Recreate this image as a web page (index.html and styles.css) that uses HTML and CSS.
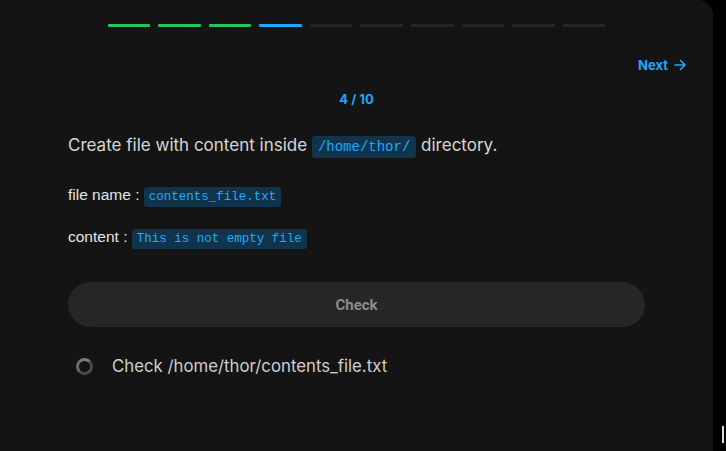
FILE: index.html
```html
<!DOCTYPE html>
<html>
<head>
<meta charset="utf-8">
<link rel="stylesheet" href="styles.css">
</head>
<body>
<div class="panel">
  <div class="progress">
    <span class="seg done"></span>
    <span class="seg done"></span>
    <span class="seg done"></span>
    <span class="seg current"></span>
    <span class="seg"></span>
    <span class="seg"></span>
    <span class="seg"></span>
    <span class="seg"></span>
    <span class="seg"></span>
    <span class="seg"></span>
  </div>
  <div class="nav">
    <a class="next">Next
      <svg width="14" height="14" viewBox="0 0 14 14" fill="none" stroke="currentColor" stroke-width="1.6" stroke-linecap="round" stroke-linejoin="round"><path d="M2 7h10M7.5 2.5 12 7l-4.5 4.5"/></svg>
    </a>
  </div>
  <div class="counter">4 / 10</div>
  <p class="title">Create file with content inside <code class="code big">/home/thor/</code> directory.</p>
  <p class="field">file name : <code class="code">contents_file.txt</code></p>
  <p class="field second">content : <code class="code">This is not empty file</code></p>
  <button class="check-btn">Check</button>
  <div class="check-item">
    <span class="ring"></span>
    <span class="check-text">Check /home/thor/contents_file.txt</span>
  </div>
</div>
<span class="cursor"></span>
</body>
</html>
```
FILE: styles.css
```css
html, body {
  margin: 0;
  padding: 0;
  background: #000;
  width: 726px;
  height: 451px;
  overflow: hidden;
}
body {
  display: flex;
  position: relative;
  font-family: Inter, "Noto Sans", sans-serif;
}
.panel {
  width: 713px;
  height: 451px;
  background: #141414;
  border-top-right-radius: 15px;
  box-sizing: border-box;
  padding: 24px 68px 0 68px;
  display: flex;
  flex-direction: column;
}
.progress {
  align-self: center;
  width: 498px;
  display: flex;
  gap: 8px;
  height: 3px;
}
.seg {
  flex: 1;
  background: #262626;
  border-radius: 1px;
}
.seg.done { background: #22c55e; }
.seg.current { background: #1ea7fd; }
.nav {
  display: flex;
  justify-content: flex-end;
  margin-top: 30px;
  margin-right: -42px;
  height: 16px;
}
.next {
  color: #1ea7fd;
  font-weight: 700;
  font-size: 13px;
  display: flex;
  align-items: center;
  gap: 5px;
}
.counter {
  text-align: center;
  color: #1ea7fd;
  font-weight: 700;
  font-size: 13px;
  margin-top: 18px;
  line-height: 16px;
}
.title {
  margin: 27px 0 0 0;
  font-size: 17px;
  color: #d6d6d6;
  line-height: 22px;
}
.code {
  font-family: "Liberation Mono", monospace;
  background: #11344d;
  color: #22a9fb;
  font-size: 12.5px;
  padding: 3px 5px;
  border-radius: 3px;
}
.code.big {
  font-size: 14px;
  padding: 3px 6px;
}
.field {
  margin: 27px 0 0 0;
  font-family: "Liberation Sans", Arial, sans-serif;
  font-size: 15.5px;
  color: #e4e4e4;
  line-height: 20px;
}
.field.second { margin-top: 20px; }
.check-btn {
  margin-top: 33px;
  height: 45px;
  border: none;
  border-radius: 23px;
  background: #262626;
  color: #8a8c90;
  font-family: Roboto, sans-serif;
  font-weight: 700;
  font-size: 15px;
  width: 100%;
}
.check-item {
  display: flex;
  align-items: center;
  margin-top: 29px;
  padding-left: 8px;
}
.ring {
  width: 11px;
  height: 11px;
  border-radius: 50%;
  border: 3px solid #4a4a4a;
  border-top-color: #7a7a7a;
  border-left-color: #6a6a6a;
}
.check-text {
  margin-left: 19px;
  font-size: 16.8px;
  color: #cfcfcf;
}
.cursor {
  position: absolute;
  left: 722px;
  top: 426px;
  width: 2px;
  height: 17px;
  background: #d8d8e8;
}
```
